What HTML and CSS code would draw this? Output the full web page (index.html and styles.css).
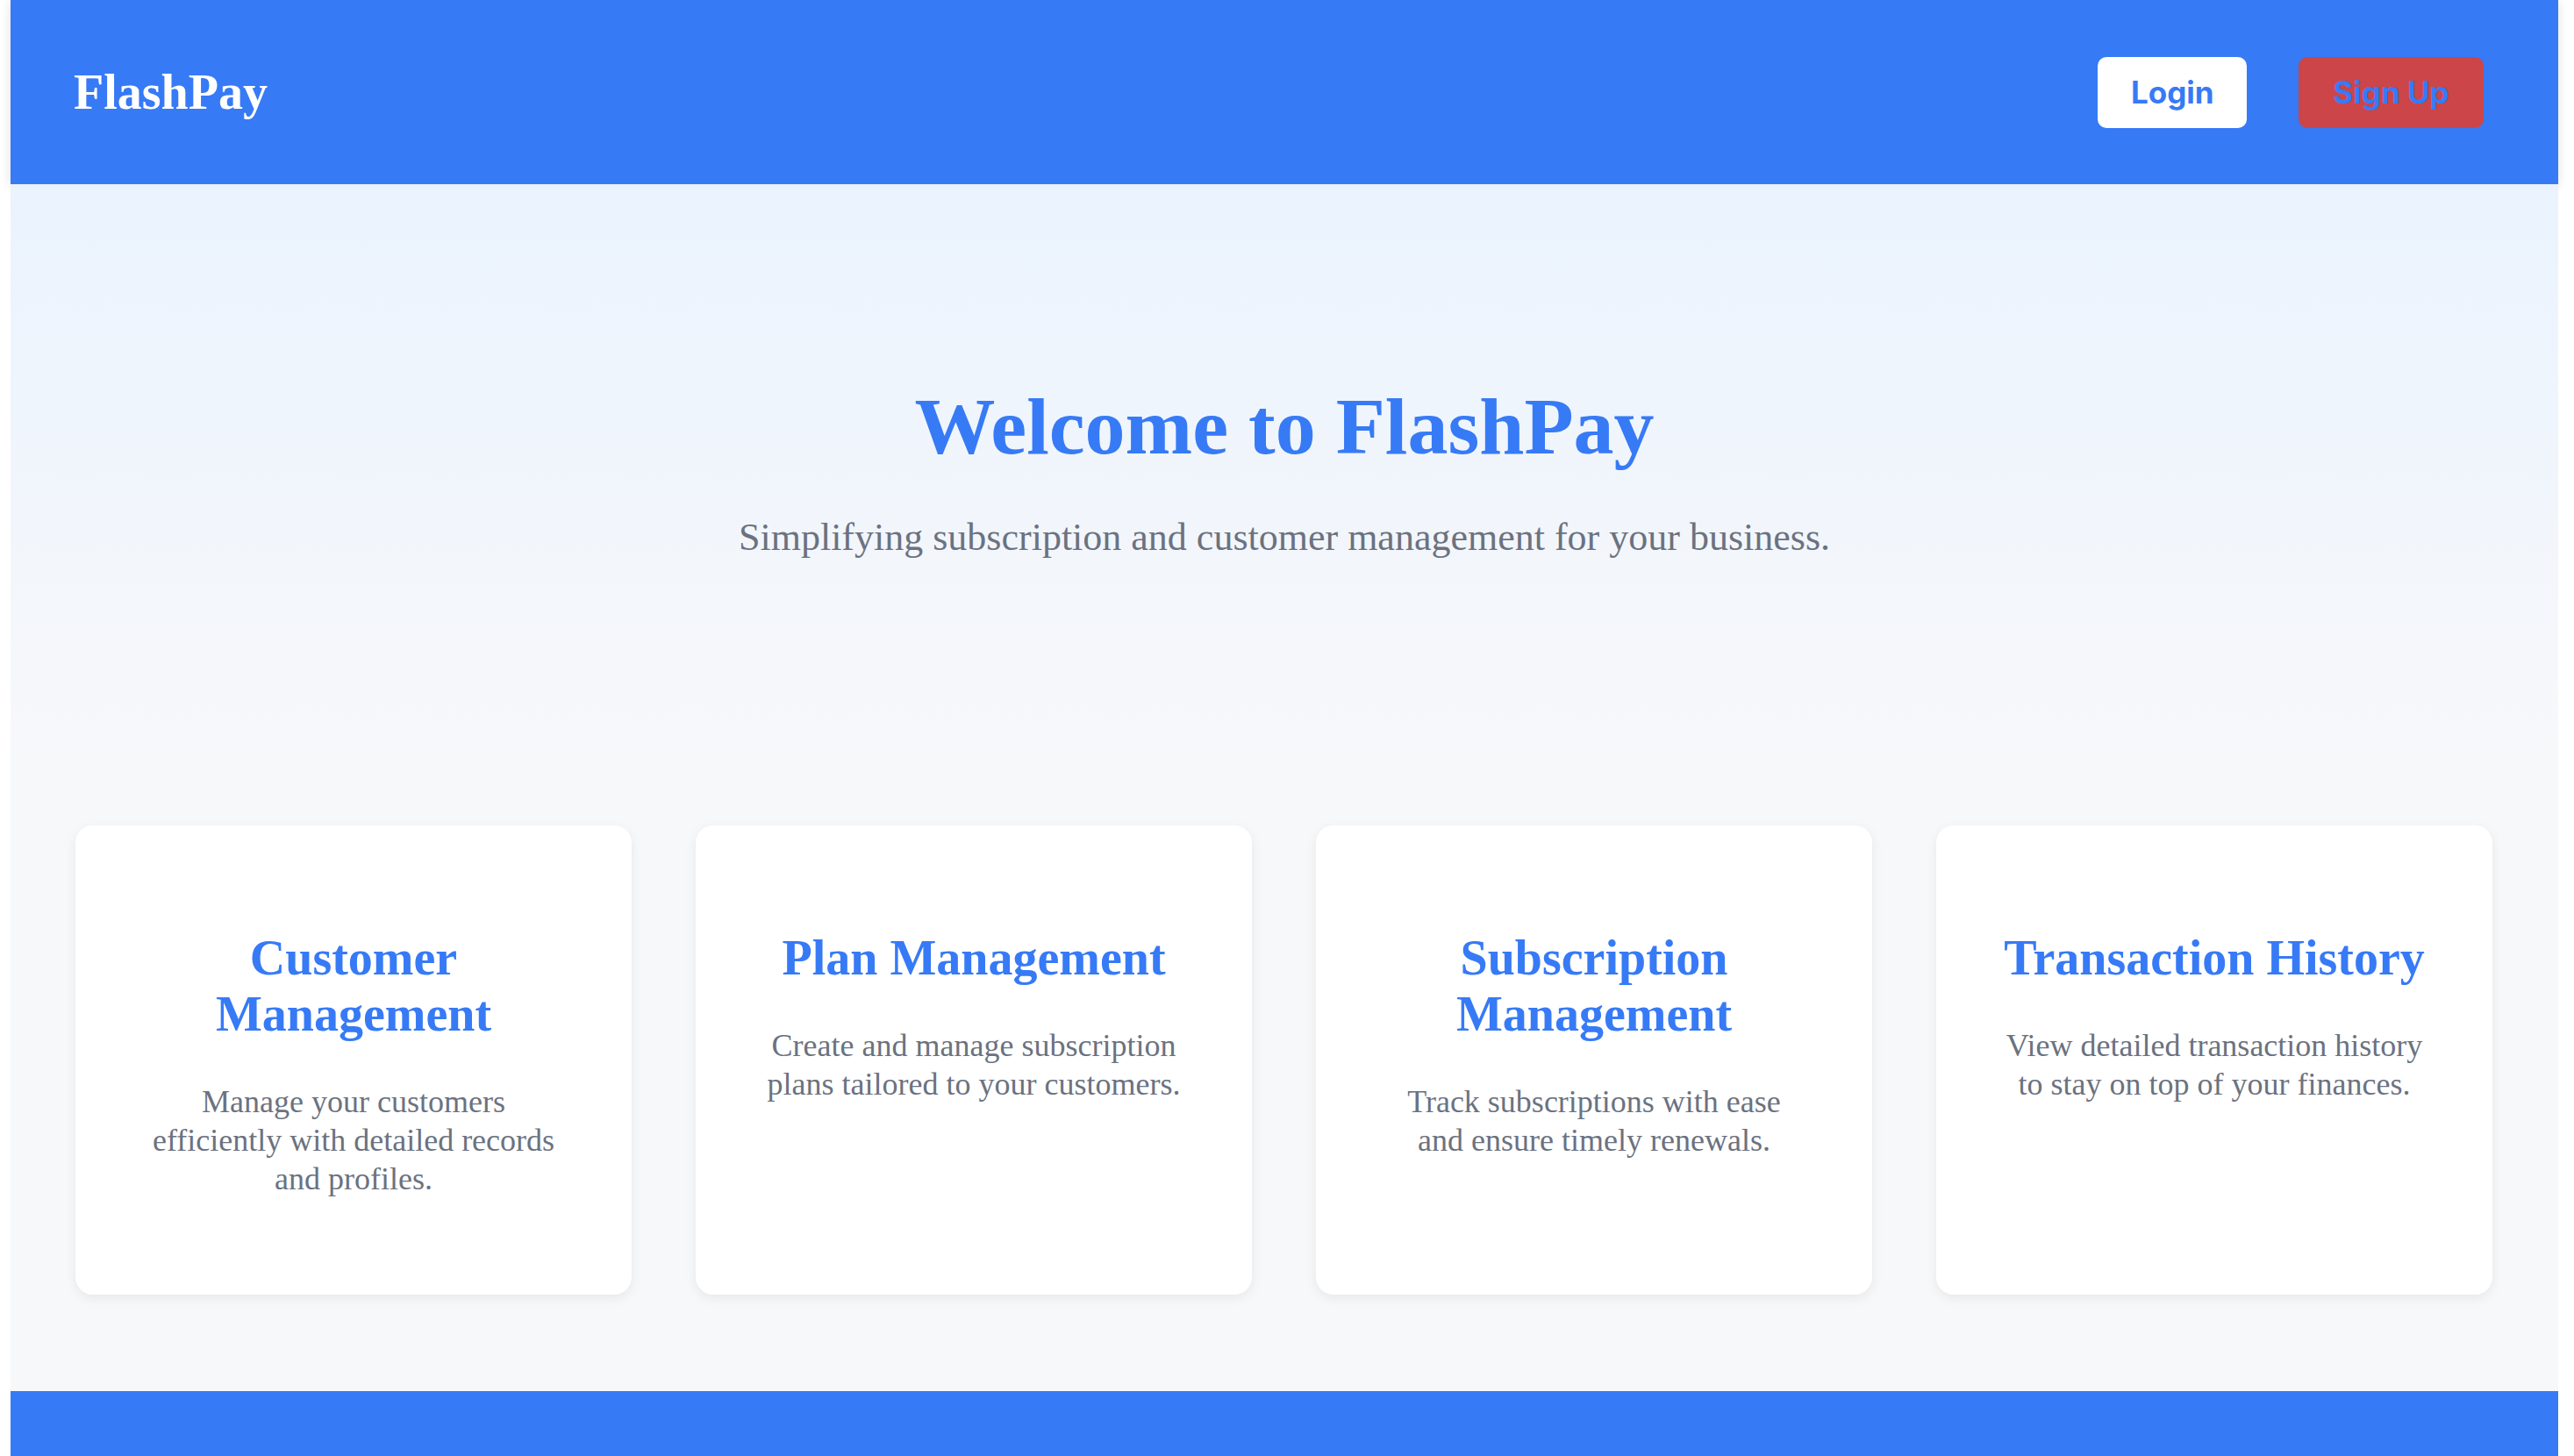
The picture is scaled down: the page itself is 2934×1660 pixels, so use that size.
FILE: index.html
```html
<!DOCTYPE html>
<html lang="en">
<head>
<meta charset="utf-8">
<title>FlashPay</title>
<link rel="stylesheet" href="styles.css">
</head>
<body>
<div class="page">
  <header class="topbar">
    <div class="logo">FlashPay</div>
    <nav class="actions">
      <a class="btn btn-login" href="#">Login</a>
      <a class="btn btn-signup" href="#">Sign Up</a>
    </nav>
  </header>
  <main class="main">
    <section class="hero">
      <h1 class="hero-title">Welcome to FlashPay</h1>
      <p class="hero-sub">Simplifying subscription and customer management for your business.</p>
    </section>
    <section class="features">
      <div class="card">
        <h3 class="card-title">Customer Management</h3>
        <p class="card-text">Manage your customers efficiently with detailed records and profiles.</p>
      </div>
      <div class="card">
        <h3 class="card-title">Plan Management</h3>
        <p class="card-text">Create and manage subscription plans tailored to your customers.</p>
      </div>
      <div class="card">
        <h3 class="card-title">Subscription Management</h3>
        <p class="card-text">Track subscriptions with ease and ensure timely renewals.</p>
      </div>
      <div class="card">
        <h3 class="card-title">Transaction History</h3>
        <p class="card-text">View detailed transaction history to stay on top of your finances.</p>
      </div>
    </section>
  </main>
  <footer class="footer"></footer>
</div>
</body>
</html>
```

FILE: styles.css
```css
html, body {
  margin: 0;
  padding: 0;
  background: #ffffff;
}

body {
  font-family: "Liberation Serif", "Times New Roman", serif;
}

.page {
  margin-left: 12px;
  width: 2904px;
  background: #f7f8fa;
}

.topbar {
  height: 210px;
  box-sizing: border-box;
  padding: 0 85px 0 72px;
  background: #377af6;
  display: flex;
  align-items: center;
  justify-content: space-between;
  box-shadow: 0 2px 12px rgba(0, 0, 0, 0.12);
}

.logo {
  color: #ffffff;
  font-family: "Liberation Serif", "Times New Roman", serif;
  font-weight: 700;
  font-size: 56px;
}

.actions {
  display: flex;
  align-items: center;
  gap: 59px;
}

.btn {
  display: block;
  font-family: "Inter", "Liberation Sans", sans-serif;
  font-weight: 700;
  font-size: 35px;
  line-height: 43px;
  padding: 19px 38px;
  border-radius: 10px;
  color: #377af6;
  text-decoration: none;
  text-align: center;
}

.btn-login {
  background: #ffffff;
  width: 94px;
}

.btn-signup {
  background: #cb4549;
  width: 135px;
}

.main {
  background: #f7f8fa;
}

.hero {
  padding: 223px 0 223px;
  text-align: center;
  background: linear-gradient(to bottom, #eaf3fe 0%, #f7f8fa 100%);
}

.hero-title {
  margin: 0;
  color: #377af6;
  font-weight: 700;
  font-size: 92px;
  line-height: normal;
}

.hero-sub {
  margin: 48px 0 0;
  color: #6b7280;
  font-size: 44px;
  line-height: normal;
}

.features {
  display: grid;
  grid-template-columns: repeat(4, 634px);
  column-gap: 73px;
  padding: 80px 74px 110px;
}

.card {
  background: #ffffff;
  border-radius: 20px;
  box-shadow: 0 4px 14px rgba(0, 0, 0, 0.07);
  padding: 119px 74px 110px;
  text-align: center;
}

.card-title {
  margin: 0;
  color: #377af6;
  font-weight: 700;
  font-size: 56px;
  line-height: normal;
}

.card-text {
  margin: 46px 0 0;
  color: #6b7280;
  font-size: 36px;
  line-height: 44px;
}

.footer {
  height: 200px;
  background: #377af6;
}
```
